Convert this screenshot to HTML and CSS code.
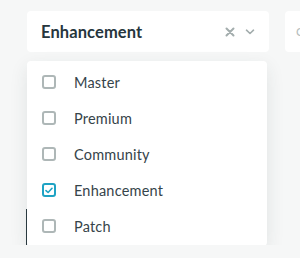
FILE: index.html
```html
<!DOCTYPE html>
<html lang="en">
<head>
    <meta charset="UTF-8">
    <meta name="viewport" content="width=device-width, initial-scale=1.0">
    <title>Filter</title>
    <link rel="stylesheet" href="styles.css">
</head>
<body>
    <div class="filters">
        <div class="select">
            <span class="select-value">Enhancement</span>
            <span class="select-icons">
                <svg class="icon-clear" width="10" height="10" viewBox="0 0 10 10">
                    <path d="M1.5 1.5 L8.5 8.5 M8.5 1.5 L1.5 8.5" stroke="#a3adad" stroke-width="2" stroke-linecap="round"/>
                </svg>
                <svg class="icon-chevron" width="10" height="6" viewBox="0 0 10 6">
                    <path d="M1.5 1.2 L5 4.5 L8.5 1.2" fill="none" stroke="#a3adad" stroke-width="1.6" stroke-linecap="round" stroke-linejoin="round"/>
                </svg>
            </span>

            <ul class="menu">
                <li class="option"><span class="checkbox"></span>Master</li>
                <li class="option"><span class="checkbox"></span>Premium</li>
                <li class="option"><span class="checkbox"></span>Community</li>
                <li class="option">
                    <span class="checkbox checked">
                        <svg width="8" height="7" viewBox="0 0 8 7">
                            <path d="M1 3.6 L3.1 5.5 L7 1.3" fill="none" stroke="#1fa3c4" stroke-width="1.6" stroke-linecap="round" stroke-linejoin="round"/>
                        </svg>
                    </span>Enhancement
                </li>
                <li class="option"><span class="checkbox"></span>Patch</li>
            </ul>
        </div>
        <div class="select select-next">
            <span class="select-placeholder">C</span>
        </div>
    </div>

    <div class="results">
        <div class="result-line"></div>
    </div>
</body>
</html>
```

FILE: styles.css
```css
body {
    margin: 0;
    background: #f6f7f7;
    font-family: 'Lato', 'Open Sans', sans-serif;
    color: #2b3a40;
    overflow: hidden;
}
.filters {
    display: flex;
    gap: 16px;
    padding: 11px 0 0 27px;
}
.select {
    position: relative;
    flex: 0 0 242px;
    height: 41px;
    box-sizing: border-box;
    display: flex;
    align-items: center;
    justify-content: space-between;
    padding: 0 14px;
    background: white;
    border-radius: 4px;
}
.select-next {
    flex: 0 0 200px;
    padding-left: 11px;
}
.select-value {
    font-size: 16.5px;
    font-weight: bold;
    letter-spacing: 0.1px;
    color: #26363d;
}
.select-placeholder {
    font-size: 12px;
    color: #b5bdbd;
}
.select-icons {
    display: flex;
    align-items: center;
    gap: 10px;
    margin-top: 1px;
}
.icon-chevron {
    margin-top: -1px;
}
.menu {
    position: absolute;
    top: 50px;
    left: 0;
    width: 240px;
    height: 185px;
    box-sizing: border-box;
    margin: 0;
    padding: 3px 0 2px;
    list-style: none;
    background: white;
    border-radius: 4px;
    box-shadow: 0 6px 18px rgba(40, 60, 60, 0.10);
    z-index: 2;
}
.option {
    display: flex;
    align-items: center;
    height: 36px;
    padding-left: 15px;
    font-size: 14.5px;
    letter-spacing: 0.2px;
    color: #36444a;
}
.checkbox {
    width: 14px;
    height: 14px;
    box-sizing: border-box;
    border: 2px solid #aeb7b7;
    border-radius: 3px;
    margin-right: 18px;
    display: flex;
    align-items: center;
    justify-content: center;
}
.checkbox.checked {
    border-color: #1fa3c4;
}
.results {
    padding: 157px 0 0 26px;
}
.result-line {
    height: 36px;
    border-left: 1px solid #2b3a40;
}
```
